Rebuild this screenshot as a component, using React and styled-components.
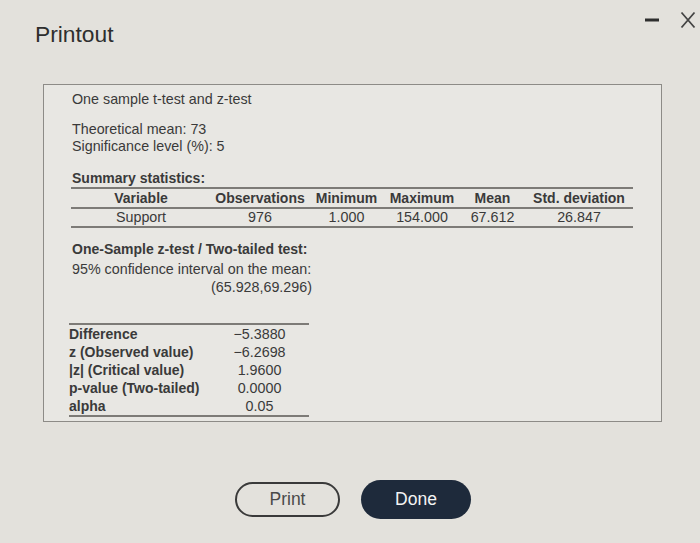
import React from "react";
import styled, { createGlobalStyle } from "styled-components";

const Global = createGlobalStyle`
  html, body { margin: 0; padding: 0; }
  body {
    background: #e3e1dc;
    font-family: "Liberation Sans", Arial, sans-serif;
    color: #3a3a3a;
  }
`;

const Page = styled.div`
  width: 700px;
  height: 543px;
  background: #e3e1dc;
  position: relative;
  overflow: hidden;
`;

const Header = styled.div`
  display: flex;
  justify-content: space-between;
  align-items: flex-start;
  height: 84px;
  padding: 0 4px 0 35px;
  box-sizing: border-box;
`;

const Title = styled.h1`
  margin: 20px 0 0;
  font-size: 22.8px;
  font-weight: 400;
  line-height: 28px;
  color: #2e2e2e;
`;

const WindowControls = styled.div`
  display: flex;
  align-items: center;
  gap: 20px;
  margin-top: 11px;
`;

const Panel = styled.div`
  margin-left: 43px;
  width: 619px;
  height: 338px;
  box-sizing: border-box;
  border: 1px solid #8d8b87;
  background: #e8e7e3;
  padding: 6px 0 0 28px;
`;

const Line = styled.div`
  font-size: ${(p) => (p.$bold ? 14 : 14.3)}px;
  line-height: 17px;
  font-weight: ${(p) => (p.$bold ? 700 : 400)};
  margin-top: ${(p) => p.$mt || 0}px;
  white-space: nowrap;
`;

const StatsTable = styled.div`
  display: grid;
  grid-template-columns: ${(p) => p.$cols};
  width: ${(p) => p.$width}px;
  margin-left: ${(p) => p.$ml}px;
  margin-top: ${(p) => p.$mt || 0}px;
  border-top: 2px solid #7d7b77;
  border-bottom: 2px solid #7d7b77;
  font-size: 14px;
`;

const Cell = styled.div`
  height: ${(p) => p.$h || 18}px;
  line-height: ${(p) => p.$h || 18}px;
  text-align: ${(p) => p.$align || "center"};
  font-weight: ${(p) => (p.$bold ? 700 : 400)};
  font-size: ${(p) => (p.$bold ? 14 : 14.3)}px;
  white-space: nowrap;
  border-bottom: ${(p) => (p.$sep ? "2px solid #7d7b77" : "none")};
`;

const Interval = styled.div`
  width: 237px;
  display: grid;
  grid-template-columns: 139px 99px;
  line-height: 17px;
  margin-top: 1px;
`;

const Buttons = styled.div`
  display: flex;
  justify-content: center;
  align-items: center;
  gap: 21px;
  margin-top: 58px;
  padding-left: 6px;
`;

const PillButton = styled.button`
  font-family: "Liberation Sans", Arial, sans-serif;
  font-size: 17.5px;
  border-radius: 20px;
  cursor: pointer;
  width: ${(p) => (p.$primary ? 110 : 105)}px;
  height: ${(p) => (p.$primary ? 39 : 35)}px;
  background: ${(p) => (p.$primary ? "#1e2a3b" : "transparent")};
  color: ${(p) => (p.$primary ? "#f4f4f4" : "#4a4a4a")};
  border: ${(p) => (p.$primary ? "none" : "2px solid #3a3a3a")};
  padding: 0;
`;

const summaryHead = ["Variable", "Observations", "Minimum", "Maximum", "Mean", "Std. deviation"];
const summaryRow = ["Support", "976", "1.000", "154.000", "67.612", "26.847"];

const results = [
  ["Difference", "\u22125.3880"],
  ["z (Observed value)", "\u22126.2698"],
  ["|z| (Critical value)", "1.9600"],
  ["p-value (Two-tailed)", "0.0000"],
  ["alpha", "0.05"],
];

export default function App() {
  return (
    <Page>
      <Global />
      <Header>
        <Title>Printout</Title>
        <WindowControls>
          <svg width="16" height="18" viewBox="0 0 16 18">
            <line x1="1" y1="9" x2="15" y2="9" stroke="#2e2e2e" strokeWidth="3" />
          </svg>
          <svg width="16" height="18" viewBox="0 0 16 18">
            <path d="M1.5 1.5 L14.5 16.5 M14.5 1.5 L1.5 16.5" stroke="#444" strokeWidth="1.8" fill="none" />
          </svg>
        </WindowControls>
      </Header>

      <Panel>
        <Line>One sample t-test and z-test</Line>
        <Line $mt={13}>Theoretical mean: 73</Line>
        <Line>Significance level (%): 5</Line>
        <Line $bold $mt={15}>Summary statistics:</Line>
        <StatsTable $cols="140px 98px 75px 76px 65px 108px" $width={562} $ml={-1}>
          {summaryHead.map((h) => (
            <Cell key={h} $bold $sep>{h}</Cell>
          ))}
          {summaryRow.map((d, i) => (
            <Cell key={i} $h={17}>{d}</Cell>
          ))}
        </StatsTable>
        <Line $bold $mt={13}>One-Sample z-test / Two-tailed test:</Line>
        <Line $mt={3}>95% confidence interval on the mean:</Line>
        <Interval>
          <span />
          <Cell $h={17}>(65.928,69.296)</Cell>
        </Interval>
        <StatsTable $cols="141px 99px" $width={240} $ml={-3} $mt={27}>
          {results.map(([k, v]) => (
            <React.Fragment key={k}>
              <Cell $bold $align="left">{k}</Cell>
              <Cell>{v}</Cell>
            </React.Fragment>
          ))}
        </StatsTable>
      </Panel>

      <Buttons>
        <PillButton>Print</PillButton>
        <PillButton $primary>Done</PillButton>
      </Buttons>
    </Page>
  );
}
